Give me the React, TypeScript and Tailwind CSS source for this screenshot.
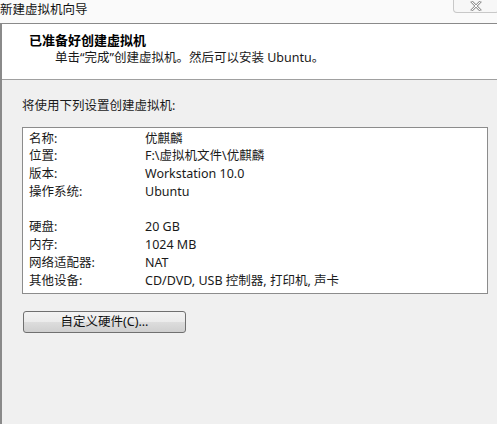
import React from "react";

const rows: [string, string][] = [
  ["名称:", "优麒麟"],
  ["位置:", "F:\\虚拟机文件\\优麒麟"],
  ["版本:", "Workstation 10.0"],
  ["操作系统:", "Ubuntu"],
  ["", ""],
  ["硬盘:", "20 GB"],
  ["内存:", "1024 MB"],
  ["网络适配器:", "NAT"],
  ["其他设备:", "CD/DVD, USB 控制器, 打印机, 声卡"],
];

export default function App() {
  return (
    <div
      className="w-[497px] h-[424px] overflow-hidden flex flex-col bg-[#f0f0f0] text-[#1a1a1a]"
      style={{ fontFamily: '"Noto Sans", "Noto Sans CJK SC", sans-serif' }}
    >
      {/* title bar */}
      <div className="h-[23px] shrink-0 bg-[#fafafa] flex items-start justify-between relative">
        <span className="text-[12.5px] leading-[20px] pl-[0px] text-[#111]">新建虚拟机向导</span>
        <div className="mr-[-2px] w-[46px] h-[13px] border border-t-0 border-[#c8c8c8] rounded-bl-[4px] rounded-br-[4px] bg-[#f7f7f7] flex items-center justify-center">
          <svg width="12" height="10" viewBox="0 0 12 10">
            <path d="M2 1 L10 9 M10 1 L2 9" stroke="#9a9a9a" strokeWidth="2.6" strokeLinecap="square" />
            <path d="M2 1 L10 9 M10 1 L2 9" stroke="#ffffff" strokeWidth="1" strokeLinecap="square" />
          </svg>
        </div>
      </div>
      <div className="flex-1 flex flex-col border-t border-l-2 border-[#8a8a8a]">
        {/* header */}
        <div className="h-[56px] shrink-0 bg-white border-b border-[#a0a0a0] flex flex-col pt-[7px]">
          <div className="pl-[27px] text-[13px] leading-[18px] font-bold text-black">已准备好创建虚拟机</div>
          <div className="pl-[53px] text-[12.5px] leading-[18px] text-[#1a1a1a]">
            单击“完成”创建虚拟机。然后可以安装 Ubuntu。
          </div>
        </div>
        {/* body */}
        <div className="flex flex-col pl-[20px] pr-[9px] pt-[17px]">
          <div className="text-[12.5px] leading-[18px]">将使用下列设置创建虚拟机:</div>
          <div className="mt-[12px] h-[167px] bg-white border border-[#8c8c8c] pt-[2px] pl-[6px]">
            {rows.map(([k, v], i) => (
              <div key={i} className="flex h-[17.75px] items-center text-[12.5px]">
                <span className="w-[116px] shrink-0">{k}</span>
                <span>{v}</span>
              </div>
            ))}
          </div>
          <button className="mt-[17px] ml-[1px] w-[163px] h-[22px] rounded-[3px] border border-[#707070] bg-[linear-gradient(to_bottom,#f3f3f3_0%,#ebebeb_50%,#dddddd_51%,#cfcfcf_100%)] text-[12.5px] leading-[18px] text-[#111] flex items-center justify-center">
            自定义硬件(C)...
          </button>
        </div>
      </div>
    </div>
  );
}
